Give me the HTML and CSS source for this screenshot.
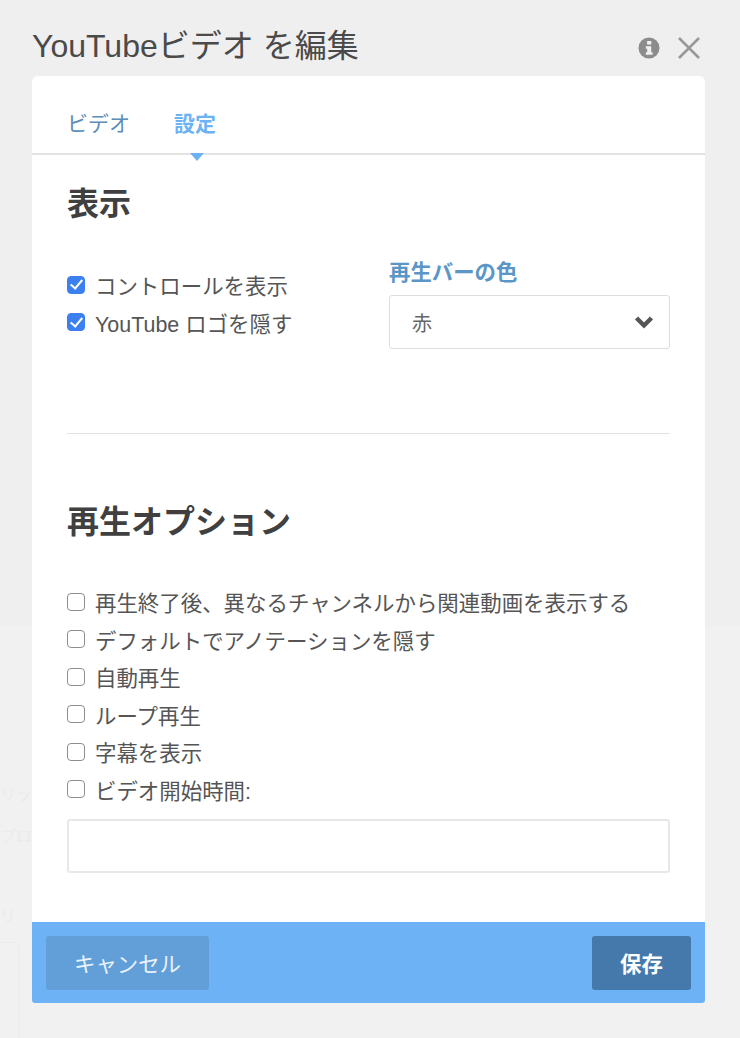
FILE: index.html
```html
<!DOCTYPE html>
<html lang="ja">
<head>
    <meta charset="UTF-8">
    <meta name="viewport" content="width=device-width, initial-scale=1.0">
    <title>YouTubeビデオ を編集</title>
    <link rel="stylesheet" href="styles.css">
</head>
<body>
    <!-- page behind the overlay -->
    <div class="ghost-page">
        <span class="ghost-text ghost-1">リッ</span>
        <span class="ghost-text ghost-2">プロ</span>
        <span class="ghost-text ghost-3">リ</span>
        <div class="ghost-card"></div>
    </div>

    <div class="dialog">
        <header class="dialog-header">
            <h1>YouTubeビデオ を編集</h1>
            <div class="header-icons">
                <svg class="icon-info" width="22" height="22" viewBox="0 0 22 22">
                    <circle cx="11" cy="11" r="10.5" fill="#8c8c8c"/>
                    <rect x="9" y="4" width="4.4" height="3.6" rx="0.8" fill="#f0f0f0"/>
                    <path d="M7.8 9.2h5.4v6h1.4v2.6H7.8v-2.6h1.4v-3.4H7.8z" fill="#f0f0f0"/>
                </svg>
                <svg class="icon-close" width="24" height="24" viewBox="0 0 24 24">
                    <path d="M2 2L22 22M22 2L2 22" stroke="#999" stroke-width="2.6" fill="none"/>
                </svg>
            </div>
        </header>

        <div class="panel">
            <nav class="tabs">
                <a class="tab">ビデオ</a>
                <a class="tab active">設定</a>
            </nav>

            <div class="panel-body">
                <section class="display-section">
                    <h2>表示</h2>
                    <div class="display-row">
                        <div class="checks">
                            <label class="check"><input type="checkbox" checked><span>コントロールを表示</span></label>
                            <label class="check"><input type="checkbox" checked><span>YouTube ロゴを隠す</span></label>
                        </div>
                        <div class="color-field">
                            <div class="field-label">再生バーの色</div>
                            <div class="select-box">
                                <span>赤</span>
                                <svg width="20" height="14" viewBox="0 0 20 14">
                                    <path d="M2.5 3L10 10.5L17.5 3" stroke="#555" stroke-width="4.4" fill="none"/>
                                </svg>
                            </div>
                        </div>
                    </div>
                </section>

                <section class="options-section">
                    <h2>再生オプション</h2>
                    <div class="checks">
                        <label class="check"><input type="checkbox"><span>再生終了後、異なるチャンネルから関連動画を表示する</span></label>
                        <label class="check"><input type="checkbox"><span>デフォルトでアノテーションを隠す</span></label>
                        <label class="check"><input type="checkbox"><span>自動再生</span></label>
                        <label class="check"><input type="checkbox"><span>ループ再生</span></label>
                        <label class="check"><input type="checkbox"><span>字幕を表示</span></label>
                        <label class="check"><input type="checkbox"><span>ビデオ開始時間:</span></label>
                    </div>
                    <input class="text-input" type="text">
                </section>
            </div>

            <footer class="dialog-footer">
                <button class="btn btn-cancel">キャンセル</button>
                <button class="btn btn-save">保存</button>
            </footer>
        </div>
    </div>
</body>
</html>
```

FILE: styles.css
```css
* {
    box-sizing: border-box;
    margin: 0;
    padding: 0;
}

body {
    width: 740px;
    height: 1038px;
    overflow: hidden;
    position: relative;
    background-color: #efefef;
    font-family: "Liberation Sans", "Noto Sans CJK JP", sans-serif;
    color: #444;
}

/* Page behind the overlay */
.ghost-page {
    position: absolute;
    left: 0;
    top: 626px;
    width: 740px;
    height: 412px;
    background-color: #f1f1f1;
}

.ghost-text {
    position: absolute;
    left: 0;
    font-size: 16px;
    line-height: 30px;
    color: #ebebeb;
}

.ghost-1 {
    top: 154px;
}

.ghost-2 {
    top: 196px;
}

.ghost-3 {
    top: 276px;
}

.ghost-card {
    position: absolute;
    left: -10px;
    top: 316px;
    width: 30px;
    height: 120px;
    border: 1px solid #ececec;
    border-radius: 6px;
}

.dialog {
    position: relative;
    padding: 24px 35px 0 32px;
}

.dialog-header {
    display: flex;
    justify-content: space-between;
    align-items: center;
    height: 52px;
}

.dialog-header h1 {
    font-size: 32px;
    font-weight: normal;
    line-height: 42px;
    color: #4a4a4a;
    margin-top: -8px;
}

.header-icons {
    display: flex;
    align-items: center;
    gap: 17px;
    margin: -5px 4px 0 0;
}

.panel {
    background-color: #fff;
    border-radius: 6px 6px 3px 3px;
    height: 927px;
    display: flex;
    flex-direction: column;
    overflow: hidden;
}

.tabs {
    display: flex;
    gap: 44px;
    height: 79px;
    padding: 33px 0 0 35px;
    border-bottom: 2px solid #e2e2e2;
}

.tab {
    position: relative;
    font-size: 21px;
    line-height: 30px;
    color: #5b8db8;
}

.tab.active {
    font-weight: bold;
    color: #6cb2f5;
}

.tab.active::after {
    content: "";
    position: absolute;
    left: 16px;
    top: 44px;
    border-left: 7px solid transparent;
    border-right: 7px solid transparent;
    border-top: 8px solid #6cb2f5;
}

.panel-body {
    flex: 1;
    padding: 0 35px;
}

h2 {
    font-size: 32px;
    font-weight: bold;
    line-height: 40px;
    color: #404040;
}

.display-section {
    height: 279px;
    padding-top: 29px;
    border-bottom: 1px solid #e2e2e2;
}

.display-row {
    display: flex;
    justify-content: space-between;
    margin-top: 42px;
}

.checks {
    display: flex;
    flex-direction: column;
}

.check {
    display: flex;
    align-items: center;
    height: 37.5px;
    font-size: 21.45px;
    color: #555;
}

.check input {
    appearance: none;
    -webkit-appearance: none;
    position: relative;
    flex: none;
    width: 18px;
    height: 18px;
    margin-right: 10px;
    border: 1.5px solid #8e8e8e;
    border-radius: 4px;
    background-color: #fff;
}

.check input:checked {
    background-color: #3c80f0;
    border-color: #3c80f0;
}

.check input:checked::after {
    content: "";
    position: absolute;
    left: 4.5px;
    top: 0.5px;
    width: 5px;
    height: 10px;
    border-right: 2.6px solid #fff;
    border-bottom: 2.6px solid #fff;
    transform: rotate(40deg);
}

.color-field {
    width: 281px;
    margin-top: -7px;
}

.field-label {
    font-size: 21.4px;
    font-weight: bold;
    line-height: 28px;
    color: #5b96c6;
}

.select-box {
    display: flex;
    justify-content: space-between;
    align-items: center;
    height: 54px;
    margin-top: 8px;
    padding: 0 15px 0 22px;
    border: 1px solid #ddd;
    border-radius: 3px;
    font-size: 20px;
    color: #666;
}

.options-section {
    padding-top: 68px;
}

.options-section .checks {
    margin-top: 41px;
}

.text-input {
    display: block;
    width: 100%;
    height: 54px;
    margin-top: 11px;
    border: 2px solid #e8e8e8;
    border-radius: 3px;
    background-color: #fff;
}

.dialog-footer {
    display: flex;
    justify-content: space-between;
    align-items: center;
    height: 81px;
    padding: 0 14px;
    background-color: #6cb2f5;
}

.btn {
    height: 54px;
    border: none;
    border-radius: 3px;
    font-family: inherit;
    font-size: 21.4px;
    color: #fff;
}

.btn-cancel {
    width: 163px;
    background-color: #629fd8;
    color: #eaf3fc;
}

.btn-save {
    width: 99px;
    font-weight: bold;
    background-color: #4579ab;
}
```
